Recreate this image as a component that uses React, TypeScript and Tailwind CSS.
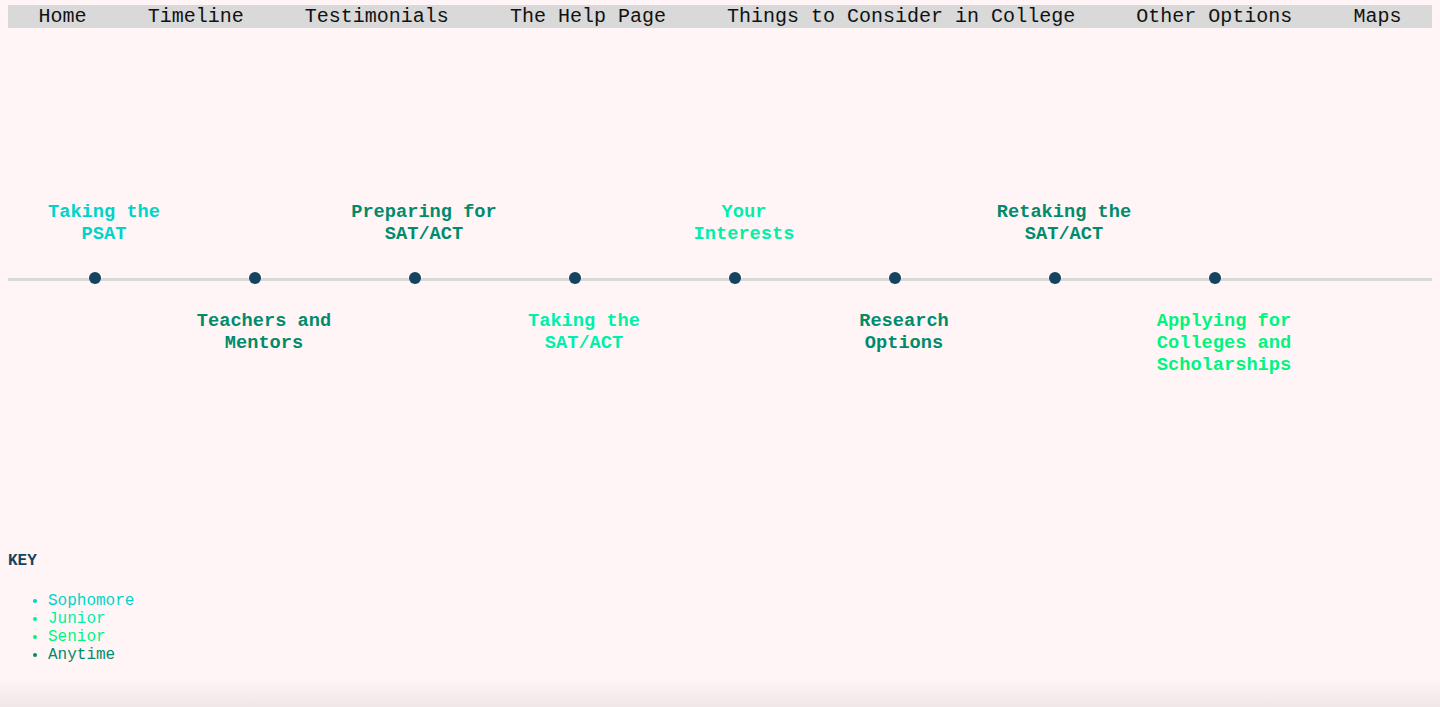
import React from "react";

const SOPH = "text-[#00d4c8]";
const JUN = "text-[#00f0a8]";
const SEN = "text-[#00f57f]";
const ANY = "text-[#008c6c]";

type Item = { label: string; pos: "top" | "bottom"; color: string };

const items: Item[] = [
  { label: "Taking the PSAT", pos: "top", color: SOPH },
  { label: "Teachers and Mentors", pos: "bottom", color: ANY },
  { label: "Preparing for SAT/ACT", pos: "top", color: ANY },
  { label: "Taking the SAT/ACT", pos: "bottom", color: JUN },
  { label: "Your Interests", pos: "top", color: JUN },
  { label: "Research Options", pos: "bottom", color: ANY },
  { label: "Retaking the SAT/ACT", pos: "top", color: ANY },
  { label: "Applying for Colleges and Scholarships", pos: "bottom", color: SEN },
];

const nav = [
  "Home",
  "Timeline",
  "Testimonials",
  "The Help Page",
  "Things to Consider in College",
  "Other Options",
  "Maps",
];

function Row({ pos }: { pos: "top" | "bottom" }) {
  return (
    <div className="flex ml-[16px]">
      {items.map((it, i) => (
        <div key={i} className="w-[160px] shrink-0 flex justify-center">
          {it.pos === pos ? (
            <div
              className={`w-[152px] pt-[1px] text-center font-bold text-[18.667px] leading-[22px] ${it.color}`}
            >
              {it.label}
            </div>
          ) : null}
        </div>
      ))}
    </div>
  );
}

export default function App() {
  return (
    <div
      className="relative min-h-[707px] bg-[#fff5f6] px-[8px] pt-[5px] overflow-hidden"
      style={{ fontFamily: '"Liberation Mono", "Courier New", monospace' }}
    >
      <nav className="flex justify-around bg-[#d9d9d9] h-[23px] pt-[1px] text-[20px] leading-[22px] text-[#111]">
        {nav.map((n) => (
          <span key={n}>{n}</span>
        ))}
      </nav>

      <div className="mt-[172px]">
        <div className="h-[44px]">
          <Row pos="top" />
        </div>
        <div className="relative mt-[28px] h-[12px]">
          <div className="absolute left-0 right-0 top-[6px] h-[3px] bg-[#d9d9d9]" />
          <div className="relative flex ml-[16px]">
            {items.map((_, i) => (
              <div key={i} className="w-[160px] shrink-0 pl-[65px]">
                <div className="w-[12px] h-[12px] rounded-full bg-[#154360]" />
              </div>
            ))}
          </div>
        </div>
        <div className="mt-[25px] h-[66px]">
          <Row pos="bottom" />
        </div>
      </div>

      <div className="mt-[177px]">
        <div className="font-bold text-[16px] leading-[18px] text-[#154360]">KEY</div>
        <ul className="mt-[22px] list-disc pl-[40px] text-[16px] leading-[18px]">
          <li className={`${SOPH} marker:text-[#00d4c8]`}>Sophomore</li>
          <li className={`${JUN} marker:text-[#00f0a8]`}>Junior</li>
          <li className={`${SEN} marker:text-[#00f57f]`}>Senior</li>
          <li className={`${ANY} marker:text-[#008c6c]`}>Anytime</li>
        </ul>
      </div>

      <div className="pointer-events-none absolute left-0 right-0 bottom-0 h-[30px] bg-gradient-to-b from-transparent to-[#efe6e7]" />
    </div>
  );
}
